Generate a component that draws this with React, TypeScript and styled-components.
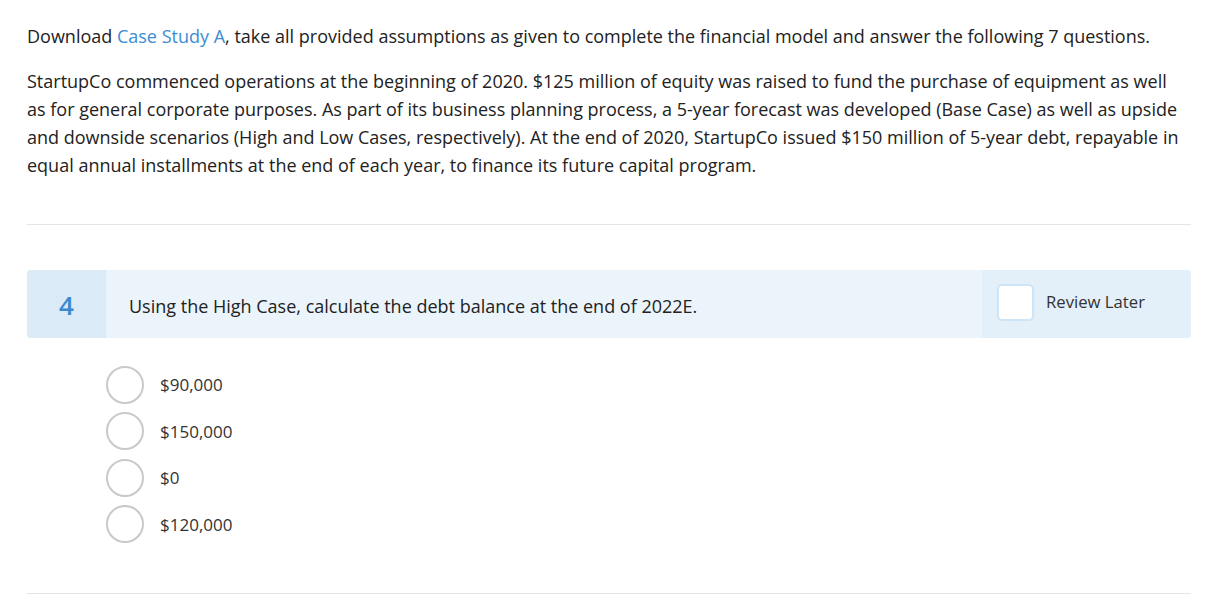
import React from "react";
import styled, { createGlobalStyle } from "styled-components";

const Global = createGlobalStyle`
  html, body { margin: 0; padding: 0; background: #ffffff; }
  body { font-family: "Open Sans", "Noto Sans", sans-serif; color: #222222; }
`;

const Page = styled.div`
  width: 1164px;
  padding: 22px 0 0 27px;
`;

const Para = styled.p<{ $gap?: number }>`
  margin: 0 0 ${(p) => p.$gap ?? 0}px 0;
  max-width: 1156px;
  font-size: 18px;
  line-height: 28px;
  color: #222222;
`;

const Link = styled.a`
  color: #3a8dd4;
  text-decoration: none;
`;

const Divider = styled.hr<{ $top: number }>`
  margin: ${(p) => p.$top}px 0 0 0;
  border: none;
  border-top: 1px solid #e6e6e6;
  height: 0;
`;

const QuestionBar = styled.div`
  margin-top: 45px;
  display: flex;
  height: 68px;
  border-radius: 4px;
  overflow: hidden;
  background: #ebf4fb;
`;

const NumberCell = styled.div`
  width: 79px;
  flex: none;
  background: #daebf7;
  display: flex;
  align-items: center;
  justify-content: center;
  color: #3a89cf;
  font-size: 26px;
  font-weight: 600;
  padding-top: 1px;
  box-sizing: border-box;
`;

const QuestionText = styled.div`
  flex: 1;
  display: flex;
  align-items: center;
  padding-left: 23px;
  padding-top: 3px;
  font-size: 18px;
  color: #222222;
`;

const ReviewCell = styled.label`
  width: 209px;
  flex: none;
  background: #e3eff9;
  display: flex;
  align-items: flex-start;
  padding: 14px 0 0 15px;
  box-sizing: border-box;
  gap: 12px;
  cursor: pointer;
`;

const CheckBox = styled.span`
  width: 37px;
  height: 37px;
  box-sizing: border-box;
  border: 2px solid #cfe4f5;
  border-radius: 5px;
  background: #ffffff;
  flex: none;
`;

const ReviewText = styled.span`
  font-size: 16.7px;
  color: #333333;
  line-height: 20px;
  padding-top: 8px;
`;

const Options = styled.div`
  margin-top: 28px;
  padding-left: 79px;
  display: flex;
  flex-direction: column;
  gap: 9px;
`;

const OptionRow = styled.label`
  display: flex;
  align-items: center;
  gap: 16px;
  height: 37.5px;
  cursor: pointer;
`;

const Radio = styled.span`
  width: 38px;
  height: 38px;
  box-sizing: border-box;
  border: 2px solid #c9c9c9;
  border-radius: 50%;
  background: #ffffff;
  flex: none;
`;

const OptionText = styled.span`
  font-size: 17px;
  color: #333333;
`;

const options = ["$90,000", "$150,000", "$0", "$120,000"];

export default function App() {
  return (
    <>
      <Global />
      <Page>
        <Para $gap={17}>
          Download <Link href="#">Case Study A</Link>, take all provided assumptions as given to complete the
          financial model and answer the following 7 questions.
        </Para>
        <Para>
          StartupCo commenced operations at the beginning of 2020. $125 million of equity was raised to fund the
          purchase of equipment as well as for general corporate purposes. As part of its business planning process,
          a 5-year forecast was developed (Base Case) as well as upside and downside scenarios (High and Low Cases,
          respectively). At the end of 2020, StartupCo issued $150 million of 5-year debt, repayable in equal annual
          installments at the end of each year, to finance its future capital program.
        </Para>
        <Divider $top={45} />
        <QuestionBar>
          <NumberCell>4</NumberCell>
          <QuestionText>Using the High Case, calculate the debt balance at the end of 2022E.</QuestionText>
          <ReviewCell>
            <CheckBox />
            <ReviewText>Review Later</ReviewText>
          </ReviewCell>
        </QuestionBar>
        <Options>
          {options.map((o) => (
            <OptionRow key={o}>
              <Radio />
              <OptionText>{o}</OptionText>
            </OptionRow>
          ))}
        </Options>
        <Divider $top={50} />
      </Page>
    </>
  );
}
